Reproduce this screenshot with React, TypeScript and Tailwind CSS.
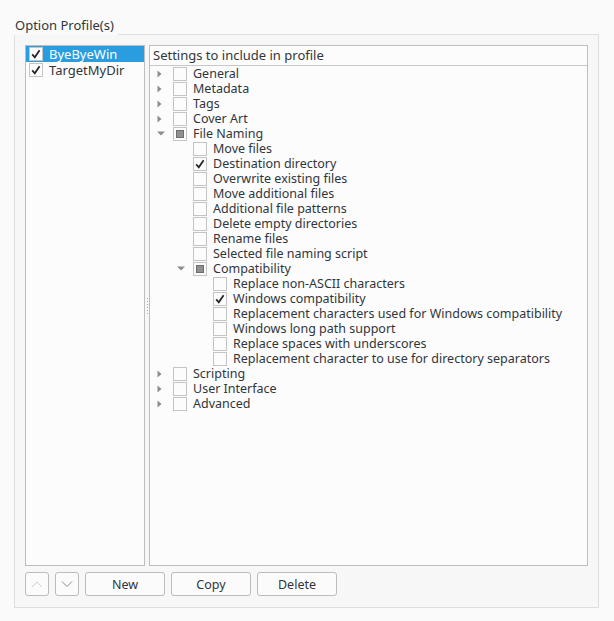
import type { ReactNode } from "react";

type Check = "on" | "off" | "partial";
type Node = { label: string; level: number; check: Check; arrow?: "right" | "down" };

const ROWS: Node[] = [
  { label: "General", level: 0, check: "off", arrow: "right" },
  { label: "Metadata", level: 0, check: "off", arrow: "right" },
  { label: "Tags", level: 0, check: "off", arrow: "right" },
  { label: "Cover Art", level: 0, check: "off", arrow: "right" },
  { label: "File Naming", level: 0, check: "partial", arrow: "down" },
  { label: "Move files", level: 1, check: "off" },
  { label: "Destination directory", level: 1, check: "on" },
  { label: "Overwrite existing files", level: 1, check: "off" },
  { label: "Move additional files", level: 1, check: "off" },
  { label: "Additional file patterns", level: 1, check: "off" },
  { label: "Delete empty directories", level: 1, check: "off" },
  { label: "Rename files", level: 1, check: "off" },
  { label: "Selected file naming script", level: 1, check: "off" },
  { label: "Compatibility", level: 1, check: "partial", arrow: "down" },
  { label: "Replace non-ASCII characters", level: 2, check: "off" },
  { label: "Windows compatibility", level: 2, check: "on" },
  { label: "Replacement characters used for Windows compatibility", level: 2, check: "off" },
  { label: "Windows long path support", level: 2, check: "off" },
  { label: "Replace spaces with underscores", level: 2, check: "off" },
  { label: "Replacement character to use for directory separators", level: 2, check: "off" },
  { label: "Scripting", level: 0, check: "off", arrow: "right" },
  { label: "User Interface", level: 0, check: "off", arrow: "right" },
  { label: "Advanced", level: 0, check: "off", arrow: "right" },
];

const PROFILES = [
  { name: "ByeByeWin", selected: true },
  { name: "TargetMyDir", selected: false },
];

const INDENT = ["pl-0", "pl-[20px]", "pl-[40px]"];

function CheckBox({ state }: { state: Check }) {
  return (
    <span className="flex h-[14px] w-[14px] shrink-0 items-center justify-center border border-[#c4c4c4] bg-[#fcfcfc]">
      {state === "on" && (
        <svg width="12" height="12" viewBox="0 0 12 12">
          <path d="M2.2 6.4 L4.8 9.3 L9.6 2.3" fill="none" stroke="#232629" strokeWidth="1.8" />
        </svg>
      )}
      {state === "partial" && <span className="h-[8px] w-[8px] border border-[#6e6e6e] bg-[#909090]" />}
    </span>
  );
}

function Arrow({ dir }: { dir?: "right" | "down" }) {
  return (
    <span className="flex w-[20px] shrink-0 items-center justify-start pl-[7px]">
      {dir === "right" && (
        <svg width="5" height="8" viewBox="0 0 5 8">
          <path d="M0.5 0.5 L4.5 4 L0.5 7.5 Z" fill="#8a8d90" />
        </svg>
      )}
      {dir === "down" && (
        <svg width="8" height="5" viewBox="0 0 8 5">
          <path d="M0 0.5 L8 0.5 L4 4.5 Z" fill="#8a8d90" />
        </svg>
      )}
    </span>
  );
}

function TreeRow({ node }: { node: Node }) {
  return (
    <div className={`flex h-[15px] items-center overflow-hidden ${INDENT[node.level]}`}>
      <Arrow dir={node.arrow} />
      <span className="ml-[3px]">
        <CheckBox state={node.check} />
      </span>
      <span className="ml-[6px] block h-[15px] whitespace-nowrap leading-[15px]">{node.label}</span>
    </div>
  );
}

function Btn({ children, w = "w-[80px]" }: { children: ReactNode; w?: string }) {
  return (
    <button className={`flex h-[24px] ${w} items-center justify-center rounded-[3px] border border-[#bcbcbc] bg-[#fbfbfb] text-[#31363b]`}>
      {children}
    </button>
  );
}

function Chevron({ up, disabled }: { up?: boolean; disabled?: boolean }) {
  return (
    <svg width="12" height="8" viewBox="0 0 12 8">
      <path
        d={up ? "M1 7 L6 2 L11 7" : "M1 1.5 L6 6.5 L11 1.5"}
        fill="none"
        stroke={disabled ? "#cfcfcf" : "#8c8c8c"}
        strokeWidth="1"
      />
    </svg>
  );
}

export default function App() {
  return (
    <div
      className="h-[621px] w-[614px] bg-[#fafafa] text-[12.5px] leading-[15px] text-[#31363b]"
      style={{ fontFamily: '"Noto Sans", "DejaVu Sans", sans-serif' }}
    >
      {/* group title + top rule */}
      <div className="flex h-[35px] pl-[14px] pr-[15px]">
        <div className="flex items-end pb-[2px] pl-[1px] pr-[4px] text-[13px] whitespace-nowrap">Option Profile(s)</div>
        <div className="flex-1 border-b border-[#dedede]" />
      </div>

      <div className="mx-[14px] mr-[15px] flex h-[573px] flex-col border-x border-b border-[#dedede] bg-[#f7f7f7] px-[10px] pt-[10px]">
        <div className="flex h-[521px]">
          {/* profile list */}
          <div className="flex w-[120px] flex-col border border-[#bdbdbd] bg-[#fcfcfc]">
            {PROFILES.map((p) => (
              <div
                key={p.name}
                className={`flex h-[16px] items-center pl-[3px] text-[13px] ${p.selected ? "bg-[#2a9de0] text-white" : ""}`}
              >
                <CheckBox state="on" />
                <span className="ml-[6px] block leading-[16px]">{p.name}</span>
              </div>
            ))}
          </div>

          {/* splitter */}
          <div className="flex w-[4px] flex-col items-center justify-center gap-[2px]">
            {[0, 1, 2, 3, 4, 5].map((i) => (
              <span key={i} className="h-[1px] w-[1px] bg-[#a8a8a8]" />
            ))}
          </div>

          {/* settings tree */}
          <div className="flex flex-1 flex-col border border-[#bdbdbd] bg-[#fcfcfc]">
            <div className="flex h-[20px] items-center border-b border-[#c8c8c8] pl-[3px] text-[13px]">
              Settings to include in profile
            </div>
            <div>
              {ROWS.map((r) => (
                <TreeRow key={r.label} node={r} />
              ))}
            </div>
          </div>
        </div>

        {/* buttons */}
        <div className="mt-[6px] flex gap-[6px]">
          <Btn w="w-[24px]">
            <Chevron up disabled />
          </Btn>
          <Btn w="w-[24px]">
            <Chevron />
          </Btn>
          <Btn>New</Btn>
          <Btn>Copy</Btn>
          <Btn>Delete</Btn>
        </div>
      </div>
    </div>
  );
}
